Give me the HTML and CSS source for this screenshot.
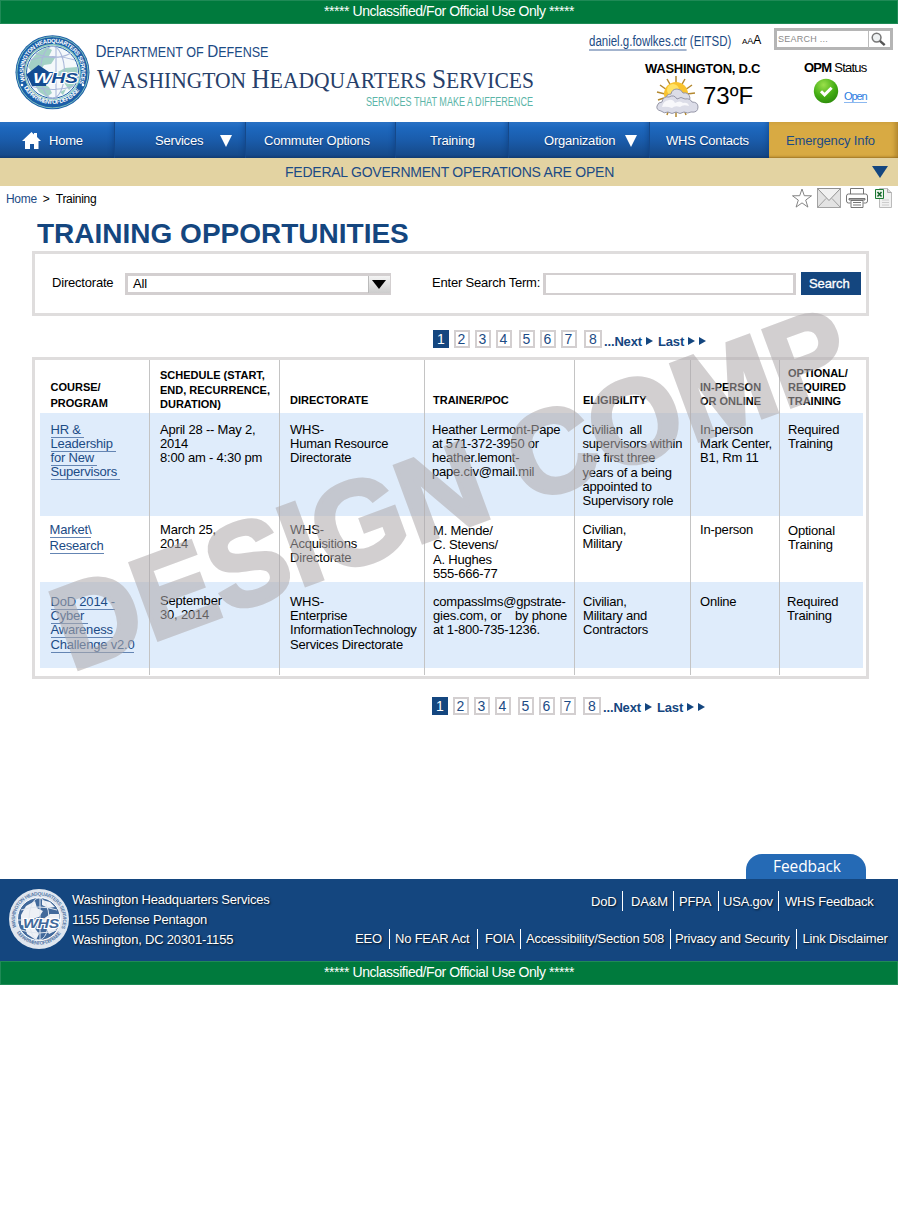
FILE: index.html
```html
<!DOCTYPE html>
<html lang="en">
<head>
<meta charset="utf-8">
<title>WHS Training Opportunities</title>
<link rel="stylesheet" href="styles.css">
</head>
<body>
<div class="banner">***** Unclassified/For Official Use Only *****</div>

<header class="header">
  <svg class="brand" width="560" height="98" viewBox="0 24 560 98">
    <defs>
      <path id="arcTop" d="M26.5 84 A28.8 28.8 0 1 1 78.5 84"/>
      <path id="arcBottom" d="M21.6 83 A33.2 33.2 0 0 0 83.4 83"/>
    </defs>
    <circle cx="52.5" cy="72.3" r="37" fill="#1b5ea8"/>
    <circle cx="52.5" cy="72.3" r="35.6" fill="none" stroke="#7fc0bd" stroke-width="1"/>
    <circle cx="52.5" cy="72.3" r="27.6" fill="#fff" stroke="#8fcabf" stroke-width="1.4"/>
    <circle cx="52.5" cy="72.3" r="26" fill="#f4f8fb" stroke="#1b5ea8" stroke-width="1"/>
    <path d="M31 60l7-8 9-5 5 3-3 6 6 2-4 6-7 1-4 6-8 1-4-5zM56 73l9-5 12-1 1 8-4 10-5 5-6-9-7-3zM35 85l6-2 8 4 3 6-5 4-8-5zM60 92l6-3-3 6z" fill="#a3d1c5"/>
    <g fill="none" stroke="#aab8da" stroke-width="1.1"><ellipse cx="52.5" cy="72.3" rx="12" ry="26"/><path d="M56 46v53M30 60q23-7 45 0M27 74h51M30 86q23 7 45 0M35 53q20 9 36 0"/></g>
    <path d="M26.500 74.500l12-9.500 10.500 7-3 14H32z" fill="#134c92"/>
    <text x="33" y="82.800" class="seal-whs" textLength="45" lengthAdjust="spacingAndGlyphs"><tspan class="seal-w">W</tspan>HS</text>
    <text class="seal-ring"><textPath href="#arcTop" textLength="112" startOffset="3">WASHINGTON HEADQUARTERS SERVICES</textPath></text>
    <text class="seal-ring"><textPath href="#arcBottom" textLength="66" startOffset="5">DEPARTMENT OF DEFENSE</textPath></text>
    <g fill="#fff"><circle cx="22" cy="85" r="1.3"/><circle cx="83" cy="85" r="1.3"/></g>
    <text class="brand-dept" x="95.5" y="57" textLength="173" lengthAdjust="spacingAndGlyphs"><tspan class="dept-cap">D</tspan>EPARTMENT OF <tspan class="dept-cap">D</tspan>EFENSE</text>
    <text class="brand-name" x="97" y="87.500" textLength="437" lengthAdjust="spacingAndGlyphs"><tspan class="name-cap">W</tspan>ASHINGTON <tspan class="name-cap">H</tspan>EADQUARTERS <tspan class="name-cap">S</tspan>ERVICES</text>
    <text class="brand-tag" x="366" y="106" textLength="167" lengthAdjust="spacingAndGlyphs">SERVICES THAT MAKE A DIFFERENCE</text>
  </svg>
  <div class="tools">
    <div class="tools-top">
      <div class="user"><a>daniel.g.fowlkes.ctr</a> (EITSD)</div>
      <div class="sizes"><span class="size-s">A</span><span class="size-m">A</span><span class="size-l">A</span></div>
      <div class="site-search">
        <span class="site-search-text">SEARCH ...</span>
        <svg class="site-search-icon" width="20" height="17" viewBox="0 0 20 17"><circle cx="8" cy="6.500" r="4.600" fill="#eef1f2" stroke="#777" stroke-width="1.600"/><path d="M11.500 10l5 4.500" stroke="#555" stroke-width="2.600"/></svg>
      </div>
    </div>
    <div class="tools-bottom">
      <div class="weather">
        <div class="weather-city">WASHINGTON, D.C</div>
        <div class="weather-row">
          <svg width="46" height="42" viewBox="0 0 46 42">
            <g stroke="#b3882f" stroke-width="1.500"><path d="M21 0v8M12 3l4 7M30 3l-4 7M5 9l7 5M37 9l-7 5M2 16l8 2M40 17l-8 1M3 24l6-2M21 33v8M14 33l-2 6M29 33l2 6M38 31l3 3"/></g>
            <circle cx="21" cy="18" r="12" fill="#f9c32f"/><circle cx="18" cy="14" r="6" fill="#ffe266"/>
            <path d="M11 23q0-5 5-5 1-5 6-5 4 0 6 4 6-1 7 5l-2 6H13z" fill="#dcdde6" stroke="#8e8f9f" stroke-width=".9"/>
            <path d="M6 35q-5-1-4-5 1-4 5-4 1-6 7-5 5-3 8 2 4-3 8 0 5-1 7 3 6 0 6 5 0 6-7 5-3 2-7 0-4 3-8 0-4 3-8 0-4 2-7-1z" fill="#dcdde8" stroke="#8d8ea0" stroke-width=".9"/>
            <path d="M7 31q1-6 7-7 4-1 6 3 5-3 8 0 5-1 6 3-6-2-9 1-5-2-8 1-5-2-10-1z" fill="#f8f8fb"/>
          </svg>
          <span class="weather-temp">73ºF</span>
        </div>
      </div>
      <div class="opm">
        <div class="opm-title"><b>OPM</b> <span>Status</span></div>
        <div class="opm-row">
          <svg width="26" height="26" viewBox="0 0 26 26"><defs><radialGradient id="ok" cx=".4" cy=".25" r=".8"><stop offset="0" stop-color="#9be04b"/><stop offset=".6" stop-color="#43ad14"/><stop offset="1" stop-color="#2c8a0c"/></radialGradient></defs><circle cx="13" cy="13" r="12.200" fill="url(#ok)"/><path d="M8 13.200l3.600 3.600 7-7" fill="none" stroke="#fff" stroke-width="3"/></svg>
          <a class="opm-link">Open</a>
        </div>
      </div>
    </div>
  </div>
</header>

<nav class="nav">
  <a class="nav-home"><svg width="19" height="17" viewBox="0 0 19 17"><path d="M9.500 0L0 9h3v8h5v-5h4v5h4.500V9H19l-4-4V1h-3v1.500z" fill="#fff"/></svg><span>Home</span></a>
  <a class="nav-services"><span>Services</span><i class="caret"></i></a>
  <a class="nav-commuter"><span>Commuter Options</span></a>
  <a class="nav-training"><span>Training</span></a>
  <a class="nav-org"><span>Organization</span><i class="caret"></i></a>
  <a class="nav-contacts"><span>WHS Contacts</span></a>
  <a class="nav-emergency"><span>Emergency Info</span></a>
</nav>

<div class="alert"><span>FEDERAL GOVERNMENT OPERATIONS ARE OPEN</span><i class="alert-caret"></i></div>

<div class="crumbs">
  <div class="trail"><a>Home</a><span class="crumb-sep">&gt;</span><span class="crumb-current">Training</span></div>
  <div class="actions">
    <svg width="20" height="20" viewBox="0 0 20 20"><path d="M10 1l2.300 6.700 7.200.1-5.800 4.300 2.200 7L10 14.900 4.100 19.100l2.200-7L.5 7.800l7.200-.1z" fill="#fff" stroke="#777" stroke-width=".9"/></svg>
    <svg width="24" height="20" viewBox="0 0 24 20"><path d="M.5.5h23v19H.5z" fill="#e3e3e3" stroke="#999" stroke-width=".9"/><path d="M.5 19.500L9 10.500M23.500 19.500L15 10.500" stroke="#999" stroke-width=".9"/><path d="M.5.5L12 12.500 23.500.5z" fill="#f1f1f1" stroke="#888" stroke-width=".9"/></svg>
    <svg class="print" width="22" height="20" viewBox="0 0 22 20"><g fill="#fff" stroke="#666" stroke-width=".9"><path d="M4.500 6V.5h13V6M4.500 15H2.500q-2 0-2-2V8q0-2 2-2h17q2 0 2 2v5q0 2-2 2h-2"/><path d="M3 10.500h16v1.500H3z" fill="#ccc"/><path d="M5 12.500h12v7H5z"/><path d="M7 14.500h8M7 17h8" /></g></svg>
    <svg width="17" height="20" viewBox="0 0 17 20"><path d="M4.500.5h8l4 4v15h-12z" fill="#f1f1f1" stroke="#bbb"/><path d="M12.500.5v4h4" fill="#ddd" stroke="#aaa"/><path d="M7 12h7M7 14.500h7M7 17h7" stroke="#ccc"/><path d="M.5 1.500h8v9h-8z" fill="#e7f2e7" stroke="#1b7a33"/><path d="M2.500 4l4 4.500M6.500 4l-4 4.500" stroke="#13642a" stroke-width="1.500"/></svg>
  </div>
</div>

<h1 class="title">TRAINING OPPORTUNITIES</h1>

<main class="main">
  <form class="filter">
    <label class="filter-dir">Directorate</label>
    <div class="select"><span>All</span><i class="select-btn"></i></div>
    <label class="filter-term">Enter Search Term:</label>
    <div class="term-box"></div>
    <div class="search-btn">Search</div>
  </form>

  <div class="pager pager-top">
    <a class="page on">1</a><a class="page">2</a><a class="page">3</a><a class="page">4</a><a class="page">5</a><a class="page">6</a><a class="page">7</a><a class="page">8</a>
    <span class="more">...Next</span><i class="arrow"></i><span class="more last">Last</span><i class="arrow"></i><i class="arrow second"></i>
  </div>

  <div class="table">
    <div class="row head">
      <div class="c1">COURSE/<br>PROGRAM</div>
      <div class="c2">SCHEDULE (START,<br>END, RECURRENCE,<br>DURATION)</div>
      <div class="c3">DIRECTORATE</div>
      <div class="c4">TRAINER/POC</div>
      <div class="c5">ELIGIBILITY</div>
      <div class="c6">IN-PERSON<br>OR ONLINE</div>
      <div class="c7">OPTIONAL/<br>REQUIRED<br>TRAINING</div>
    </div>
    <div class="row r1">
      <div class="c1"><a>HR &amp;&nbsp;</a><br><a>Leadership&nbsp;</a><br><a>for New&nbsp;</a><br><a>Supervisors&nbsp;</a></div>
      <div class="c2">April 28 -- May 2,<br>2014<br>8:00 am - 4:30 pm</div>
      <div class="c3">WHS-<br>Human Resource<br>Directorate</div>
      <div class="c4">Heather Lermont-Pape<br>at 571-372-3950 or<br>heather.lemont-<br>pape.civ@mail.mil</div>
      <div class="c5">Civilian&nbsp; all<br>supervisors within<br>the first three<br>years of a being<br>appointed to<br>Supervisory role</div>
      <div class="c6">In-person<br>Mark Center,<br>B1, Rm 11</div>
      <div class="c7">Required<br>Training</div>
    </div>
    <div class="row r2">
      <div class="c1"><a>Market\</a><br><a>Research</a></div>
      <div class="c2">March 25,<br>2014</div>
      <div class="c3">WHS-<br>Acquisitions<br>Directorate</div>
      <div class="c4">M. Mende/<br>C. Stevens/<br>A. Hughes<br>555-666-77</div>
      <div class="c5">Civilian,<br>Military</div>
      <div class="c6">In-person</div>
      <div class="c7">Optional<br>Training</div>
    </div>
    <div class="row r3">
      <div class="c1"><a>DoD 2014 -</a><br><a>Cyber&nbsp;</a><br><a>Awareness</a><br><a>Challenge v2.0</a></div>
      <div class="c2">September<br>30, 2014</div>
      <div class="c3">WHS-<br>Enterprise<br>InformationTechnology<br>Services Directorate</div>
      <div class="c4">compasslms@gpstrate-<br>gies.com, or &nbsp;&nbsp; by phone<br>at 1-800-735-1236.</div>
      <div class="c5">Civilian,<br>Military and<br>Contractors</div>
      <div class="c6">Online</div>
      <div class="c7">Required<br>Training</div>
    </div>
    <div class="row tail"><div></div><div></div><div></div><div></div><div></div><div></div><div></div></div>
  </div>

  <div class="pager pager-bottom">
    <a class="page on">1</a><a class="page">2</a><a class="page">3</a><a class="page">4</a><a class="page">5</a><a class="page">6</a><a class="page">7</a><a class="page">8</a>
    <span class="more">...Next</span><i class="arrow"></i><span class="more last">Last</span><i class="arrow"></i><i class="arrow second"></i>
  </div>

  <svg class="watermark" width="898" height="500" viewBox="0 250 898 500"><text transform="translate(71.5 671.5) rotate(-20.2)" x="0 85 163.6 242.2 275 366.7 451.7 484.5 569.6 661.3 759.5">DESIGN COMP</text></svg>
</main>

<a class="feedback">Feedback</a>
<footer class="footer">
  <svg class="footer-seal" width="60" height="60" viewBox="0 0 60 60">
    <defs><path id="fTop" d="M8 40A24 24 0 1 1 52 40"/><path id="fBottom" d="M5.800 40A26.500 26.500 0 0 0 54.200 40"/></defs>
    <circle cx="30" cy="30" r="30" fill="#dfe6ef"/>
    <circle cx="30" cy="30" r="21.500" fill="#41699b" stroke="#fff" stroke-width="1"/>
    <path d="M12 26l5-9 9-5 2 7 6 3-4 6-7 2 3 4-6 3-8-1zM33 31l8-6 9 0 1 8-5 9-6 3-4-8zM16 38l9 0 5 7-3 6-9-6zM33 11l8 2 5 5-7 1-6-3z" fill="#eef1f6"/>
    <g fill="none" stroke="#dfe6ef" stroke-width="1"><ellipse cx="30" cy="30" rx="10" ry="21"/><path d="M31 9v42M12 21q18-6 36 0M9 31h42M12 41q18 6 36 0"/></g>
    <text class="fseal-whs" x="14" y="38.500" textLength="36" lengthAdjust="spacingAndGlyphs">WHS</text>
    <text class="fseal-ring"><textPath href="#fTop" startOffset="2" textLength="92">WASHINGTON HEADQUARTERS SERVICES</textPath></text>
    <text class="fseal-ring"><textPath href="#fBottom" startOffset="4" textLength="52">DEPARTMENT OF DEFENSE</textPath></text>
  </svg>
  <address class="address">Washington Headquarters Services<br>1155 Defense Pentagon<br>Washington, DC 20301-1155</address>
  <div class="links">
    <div class="links-row links-top"><a class="l1">DoD</a><a class="l2">DA&amp;M</a><a class="l3">PFPA</a><a class="l4">USA.gov</a><a class="l5">WHS Feedback</a></div>
    <div class="links-row links-bottom"><a class="m1">EEO</a><a class="m2">No FEAR Act</a><a class="m3">FOIA</a><a class="m4">Accessibility/Section 508</a><a class="m5">Privacy and Security</a><a class="m6">Link Disclaimer</a></div>
  </div>
</footer>
<div class="banner">***** Unclassified/For Official Use Only *****</div>
</body>
</html>
```

FILE: styles.css
```css
* { box-sizing: border-box; }
body { margin: 0; width: 898px; height: 1216px; background: #fff; color: #000; font: 13px/14px "Liberation Sans", Arial, sans-serif; overflow: hidden; white-space: nowrap; }
svg { display: block; flex: none; }
i { display: block; flex: none; }

.banner { height: 24px; background: #007a3d; border: 1px solid #1f8a56; color: #fff; text-align: center; font-size: 14px; line-height: 20px; letter-spacing: -0.45px; }

/* header */
.header { display: flex; height: 98px; }
.seal-whs { font: italic bold 15px "Liberation Sans", sans-serif; fill: #134c92; stroke: #fff; stroke-width: 2px; paint-order: stroke; }
.seal-w { fill: #fff; stroke: #134c92; }
.seal-ring { font: bold 6px "Liberation Sans", sans-serif; fill: #fff; }
.brand-dept { font: 14px "Liberation Sans", sans-serif; fill: #1c4b85; }
.dept-cap { font-size: 17px; }
.brand-name { font: 23px "Liberation Serif", serif; fill: #27406a; }
.name-cap { font-size: 27px; }
.brand-tag { font: 12px "Liberation Sans", sans-serif; fill: #5bb5a8; }
.tools { width: 338px; }
.tools-top { display: flex; height: 30px; padding-left: 29px; }
.user { width: 153px; padding-top: 10px; color: #1c4b85; font-size: 14px; transform: scaleX(.82); transform-origin: 0 0; }
.user a { border-bottom: 2px solid #a3b4ce; }
.sizes { width: 32px; padding-top: 9px; }
.size-s { font-size: 8px; }
.size-m { font-size: 9px; }
.size-l { font-size: 12px; }
.site-search { display: flex; align-items: center; width: 119px; height: 22px; margin-top: 4px; border: 3px solid #b5b5b5; }
.site-search-text { width: 91px; padding-left: 1px; font-size: 9px; letter-spacing: .25px; color: #8a8a8a; }
.site-search-icon { border-left: 1px solid #bbb; }
.tools-bottom { display: flex; padding-left: 85px; }
.weather { width: 159px; padding-top: 8px; }
.weather-city { font-weight: bold; line-height: 14px; font-size: 13px; letter-spacing: -0.25px; }
.weather-row { display: flex; margin-left: 10px; }
.weather-temp { padding: 11px 0 0 2px; font-size: 24px; line-height: 18px; }
.opm-title { padding-top: 7px; letter-spacing: -0.75px; }
.opm-row { display: flex; padding: 3px 0 0 9px; }
.opm-link { margin: 12px 0 0 5px; height: 13px; font-size: 11px; line-height: 12px; letter-spacing: -1.1px; color: #2a7de1; border-bottom: 1px solid #8bb8f0; }

/* navigation */
.nav { display: grid; grid-template-columns: 115px 131px 150px 113px 141px 119px 129px; height: 36px; }
.nav a { display: flex; align-items: center; color: #fff; background: linear-gradient(#2b74c8, #1d68be 15%, #1a5cab 50%, #164a8a 92%, #123c72); border-right: 1px solid #15498a; box-shadow: inset -4px 0 4px -2px rgba(10, 50, 110, .35); text-shadow: 0 1px 1px rgba(0, 20, 60, .5); letter-spacing: -0.2px; padding-top: 1px; }
.nav .nav-home { padding-left: 22px; gap: 8px; }
.nav .nav-services { padding-left: 40px; }
.nav .nav-commuter { padding-left: 18px; }
.nav .nav-training { padding-left: 34px; }
.nav .nav-org { padding-left: 35px; }
.nav .nav-contacts { padding-left: 16px; border-right: 0; }
.nav .nav-emergency { padding-left: 17px; color: #1c4b85; background: #d8aa43; text-shadow: none; border-right: 0; box-shadow: inset -4px 0 4px -1px rgba(130, 90, 20, .4), inset 0 -2px 2px -1px rgba(130, 90, 20, .6); letter-spacing: -0.15px; }
.caret { width: 0; height: 0; border: 6px solid transparent; border-top: 12px solid #fff; border-bottom: 0; }
.nav-services span { width: 65px; }
.nav-org span { width: 81px; }

.alert { display: flex; justify-content: space-between; height: 28px; padding: 0 10px 0 285px; background: #e3d3a2; color: #1c4b85; font-size: 14px; line-height: 28px; letter-spacing: -0.24px; }
.alert-caret { margin-top: 8px; width: 0; height: 0; border: 8px solid transparent; border-top: 12px solid #14467f; border-bottom: 0; }

.crumbs { display: flex; justify-content: space-between; height: 29px; padding: 2px 6px 0; }
.trail { display: flex; padding-top: 4px; font-size: 12px; line-height: 14px; letter-spacing: -0.3px; }
.trail a { color: #1c4b85; }
.crumb-sep { width: 19px; padding-left: 6px; }
.actions { display: flex; gap: 5px; }
.print { margin-right: 2px; }

.title { margin: 0; height: 36px; padding-left: 37px; font-size: 28px; line-height: 37px; color: #14467f; }

/* filter form */
.main { position: relative; padding-left: 32px; }
.filter { display: flex; width: 837px; height: 65px; border: 3px solid #dfdddd; font-size: 13px; line-height: 14px; letter-spacing: -0.2px; }
.filter-dir { width: 90px; padding: 22px 0 0 17px; }
.select { display: flex; justify-content: space-between; width: 266px; height: 22px; margin-top: 19px; border: 3px solid #d3cfd0; border-right-width: 1px; }
.select span { padding: 1px 0 0 5px; }
.select-btn { width: 22px; height: 17px; border-left: 1px solid #bbb; background: linear-gradient(#f4f4f4, #ccc); }
.select-btn::before { content: ""; display: block; width: 0; margin: 4px 0 0 3px; border: 7.5px solid transparent; border-top: 9px solid #000; border-bottom: 0; }
.filter-term { width: 152px; padding: 22px 0 0 41px; }
.term-box { width: 253px; height: 22px; margin-top: 19px; border: 3px solid #d3cfd0; border-top-width: 2px; border-bottom-width: 2px; }
.search-btn { width: 60px; height: 23px; margin: 18px 0 0 5px; padding-left: 8px; background: #14467f; color: #fff; line-height: 23px; letter-spacing: -0.1px; -webkit-text-stroke: .3px #fff; }

/* pager */
.pager { display: flex; height: 41px; padding: 14px 0 0 401px; color: #1c4b85; }
.pager-bottom { padding: 18px 0 0 400px; }
.page { width: 16px; height: 18px; border: 2px solid #d3cfd0; text-align: center; line-height: 15px; font-size: 14px; margin-right: 5px; }
.page:first-child { margin-right: 4.5px; }
.page.on { background: #14467f; border-color: #14467f; color: #fff; }
.page:nth-child(4) { margin-right: 7px; }
.page:nth-child(7) { margin-right: 7.5px; }
.page:nth-child(8) { width: 18px; margin-right: 2px; }
.more { padding-top: 5px; font-weight: bold; font-size: 13px; line-height: 14px; color: #14467f; letter-spacing: -0.15px; }
.pager-bottom .more { padding-top: 4px; }
.pager-bottom .arrow { margin-top: 6px; }
.arrow { width: 0; height: 0; margin: 7px 5px 0 4px; border: 4.5px solid transparent; border-left: 7px solid #14467f; border-right: 0; }
.arrow.second { margin-left: -1px; }

/* course table */
.table { width: 837px; height: 322px; padding-left: 5px; border: 3px solid #dfdddd; background: #fff; letter-spacing: -0.2px; }
.row { display: grid; grid-template-columns: 110px 130px 145px 150px 116px 89px 83px; width: 823px; }
.row > div { border-right: 1px solid #c4c4c4; }
.row > div:last-child { border-right: 0; }
.head { height: 53px; font-weight: bold; font-size: 11px; line-height: 14px; letter-spacing: 0; }
.r1, .r3 { background: #dfecfb; }
.r1 { height: 103px; }
.r2 { height: 66px; }
.r3 { height: 86px; }
.tail { height: 7px; }
.c1 { padding-left: 10.5px; }
.c2 { padding-left: 10px; }
.c3 { padding-left: 10px; }
.c4 { padding-left: 8px; }
.c5 { padding-left: 8px; }
.c6 { padding-left: 9px; }
.c7 { padding-left: 8px; }
.row a { color: #1c4b85; border-bottom: 1px solid #6485b3; }
.head .c1 { padding-top: 19px; line-height: 16px; }
.head .c2 { padding-top: 8px; line-height: 14.500px; }
.head .c3, .head .c4, .head .c5 { padding-top: 33px; }
.head .c6 { padding-top: 20px; }
.head .c7 { padding-top: 6px; }
.r1 > div { padding-top: 10px; }
.r1 .c4 { padding-left: 7px; }
.r1 .c5 { padding-left: 7.5px; line-height: 14.200px; }
.r2 > div { padding-top: 7px; }
.r2 .c1 { padding-left: 9.5px; line-height: 16px; padding-top: 6px; }
.r2 .c4, .r2 .c7 { padding-top: 8px; }
.r2 .c4 { line-height: 14.400px; }
.r2 .c5 { padding-left: 7.5px; }
.r3 > div { padding-top: 13px; }
.r3 .c1, .r3 .c3 { line-height: 14.200px; }
.r3 .c2 { padding-top: 12px; }
.r3 .c7 { padding-left: 7px; }

.watermark { position: absolute; left: 0; top: -1px; pointer-events: none; }
.watermark text { font: bold 118px "Liberation Sans", sans-serif; fill: #b0abad; stroke: #b0abad; stroke-width: 4px; opacity: .56; }

/* footer */
.feedback { display: block; width: 120px; height: 25px; margin: 134px 0 0 746px; padding-left: 2px; border-radius: 16px 16px 0 0; background: #256ab5; color: #fff; font: 15.500px/25px "Open Sans", sans-serif; text-align: center; letter-spacing: -0.1px; }
.footer { display: flex; height: 82px; padding-left: 9px; background: #14467f; color: #fff; text-shadow: 1px 1px 2px rgba(0, 0, 0, .8); letter-spacing: -0.2px; }
.footer-seal { margin-top: 10px; }
.fseal-whs { font: italic bold 12px "Liberation Sans", sans-serif; fill: #41699b; stroke: #fff; stroke-width: 2px; paint-order: stroke; text-shadow: none; }
.fseal-ring { font: bold 5px "Liberation Sans", sans-serif; fill: #587aa8; text-shadow: none; }
.address { width: 250px; padding: 11px 0 0 3px; font-style: normal; line-height: 20px; }
.links { width: 579px; padding-top: 12px; }
.links-row { display: flex; height: 20px; line-height: 21px; }
.links-row a { border-left: 1px solid #fff; }
.links-row a:first-child { border-left: 0; }
.links-bottom { margin-top: 18px; line-height: 20px; }
.l1 { margin-left: 272px; width: 31px; }
.l2 { width: 51px; padding-left: 8px; }
.l3 { width: 45px; padding-left: 5px; }
.l4 { width: 60px; padding-left: 4px; }
.l5 { padding-left: 6px; }
.m1 { margin-left: 36px; width: 34px; }
.m2 { width: 88px; padding-left: 5px; }
.m3 { width: 43px; padding-left: 7px; }
.m4 { width: 150px; padding-left: 5px; }
.m5 { width: 126px; padding-left: 4px; }
.m6 { padding-left: 5.5px; }
```
